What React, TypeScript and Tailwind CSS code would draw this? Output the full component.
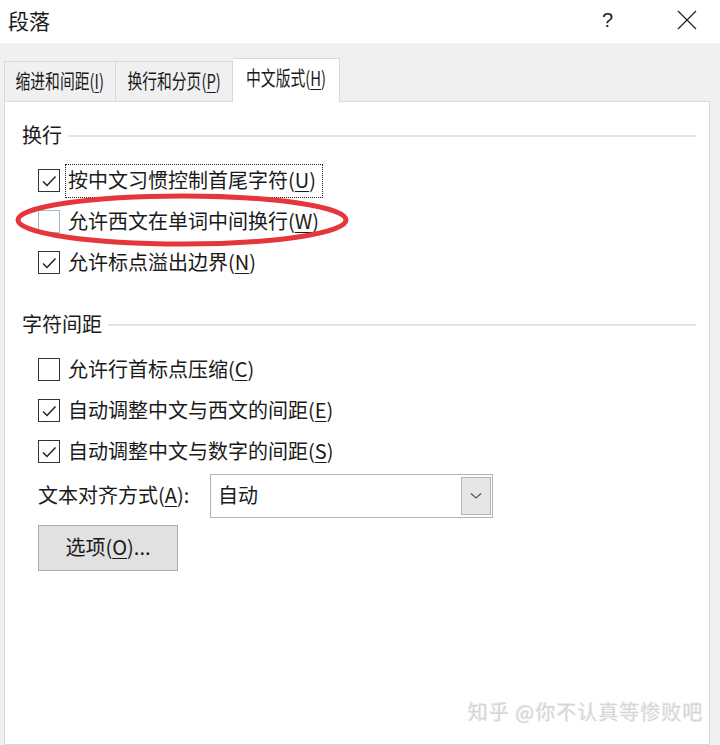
import React from "react";

const U = ({ c }: { c: string }) => <span className="underline underline-offset-[3px] decoration-1">{c}</span>;

function Box({ checked, pale }: { checked?: boolean; pale?: boolean }) {
  return (
    <div
      className={`w-[22px] h-[23px] shrink-0 border-[1.5px] bg-white flex items-center justify-center ${
        pale ? "border-[#9dbccc]" : "border-[#333333]"
      }`}
    >
      {checked && (
        <svg width="18" height="18" viewBox="0 0 18 18" fill="none">
          <path d="M3 9.5 L7 13.5 L15.5 4.5" stroke="#222" strokeWidth="1.5" />
        </svg>
      )}
    </div>
  );
}

function Row({ checked, pale, focus, children }: { checked?: boolean; pale?: boolean; focus?: boolean; children: React.ReactNode }) {
  return (
    <div className="h-[41px] flex items-center ml-[16px]">
      <Box checked={checked} pale={pale} />
      <div
        className={`ml-[6px] h-[32px] flex items-center pl-[2px] pr-[6px] whitespace-nowrap pb-[2px] ${
          focus ? "outline-1 outline-dotted outline-[#222]" : ""
        }`}
      >
        {children}
      </div>
    </div>
  );
}

function Header({ children }: { children: React.ReactNode }) {
  return (
    <div className="h-[28px] flex items-center mr-[13px]">
      <span className="whitespace-nowrap mt-[-2px]">{children}</span>
      <div className="flex-1 h-[2px] bg-[#e3e3e3] ml-[6px]" />
    </div>
  );
}

export default function App() {
  return (
    <div
      className="w-[720px] h-[745px] bg-[#f0f0f0] overflow-hidden relative flex flex-col text-[20px] text-[#1a1a1a] leading-none"
      style={{ fontFamily: '"Noto Sans CJK SC", "Noto Sans", sans-serif' }}
    >
      {/* title bar */}
      <div className="h-[43px] bg-white flex items-center shrink-0">
        <span className="ml-[8px] text-[21px] mt-[-2px]">段落</span>
        <div className="flex-1" />
        <span className="text-[20px] text-[#222] font-light mr-[64px] mt-[-4px]" style={{ fontFamily: '"Liberation Sans", sans-serif' }}>?</span>
        <svg width="20" height="20" viewBox="0 0 20 20" className="mr-[23px] mt-[-4px]">
          <path d="M1 1 L19 19 M19 1 L1 19" stroke="#222" strokeWidth="1.2" />
        </svg>
      </div>

      <div className="flex-1 flex flex-col pl-[4px] pr-[10px] pt-[14px]">
        {/* tabs */}
        <div className="flex items-end h-[44px] relative z-10 text-[20px] whitespace-nowrap">
          <div className="h-[40px] w-[112px] border border-b-0 border-[#d9d9d9] bg-[#f0f0f0] flex items-center justify-center pb-[2px]">
            <span className="inline-block scale-x-[0.74]">缩进和间距(<U c="I" />)</span>
          </div>
          <div className="h-[40px] w-[117px] border border-b-0 border-l-0 border-[#d9d9d9] bg-[#f0f0f0] flex items-center justify-center pb-[2px]">
            <span className="inline-block scale-x-[0.74]">换行和分页(<U c="P" />)</span>
          </div>
          <div className="h-[44px] w-[107px] border border-b-0 border-l-0 border-[#d9d9d9] bg-white flex items-center justify-center mb-[-1px] pb-[6px]">
            <span className="inline-block scale-x-[0.74]">中文版式(<U c="H" />)</span>
          </div>
        </div>

        {/* panel */}
        <div className="flex-1 bg-white border border-[#d9d9d9] pl-[17px] pt-[20px] flex flex-col">
          <Header>换行</Header>
          <div className="mt-[10px]">
            <Row checked focus>
              <span>按中文习惯控制首尾字符(<U c="U" />)</span>
            </Row>
            <Row pale>
              <span>允许西文在单词中间换行(<U c="W" />)</span>
            </Row>
            <Row checked>
              <span>允许标点溢出边界(<U c="N" />)</span>
            </Row>
          </div>

          <div className="mt-[28px]">
            <Header>字符间距</Header>
          </div>
          <div className="mt-[10px]">
            <Row>
              <span>允许行首标点压缩(<U c="C" />)</span>
            </Row>
            <Row checked>
              <span>自动调整中文与西文的间距(<U c="E" />)</span>
            </Row>
            <Row checked>
              <span>自动调整中文与数字的间距(<U c="S" />)</span>
            </Row>
          </div>

          <div className="mt-[2px] h-[44px] flex items-center ml-[16px] whitespace-nowrap">
            <span className="w-[172px] mt-[-2px]">文本对齐方式(<U c="A" />):</span>
            <div className="w-[283px] h-[44px] border border-[#b4b4b4] bg-white flex items-center">
              <span className="ml-[7px] flex-1 mt-[-2px]">自动</span>
              <div className="w-[30px] h-[38px] mr-[1px] bg-[#e6e6e6] border border-[#b4b4b4] flex items-center justify-center">
                <svg width="12" height="8" viewBox="0 0 12 8">
                  <path d="M1 1.5 L6 6 L11 1.5" stroke="#555" strokeWidth="1.2" fill="none" />
                </svg>
              </div>
            </div>
          </div>

          <div className="mt-[7px] ml-[16px]">
            <div className="w-[140px] h-[46px] bg-[#e1e1e1] border border-[#adadad] flex items-center justify-center whitespace-nowrap pb-[2px]">
              <span>选项(<U c="O" />)...</span>
            </div>
          </div>
        </div>
      </div>

      {/* red ellipse annotation */}
      <svg className="absolute left-0 top-0 pointer-events-none" width="720" height="745">
        <ellipse cx="182" cy="220" rx="164" ry="24" fill="none" stroke="#e5363c" strokeWidth="5" />
      </svg>

      {/* watermark */}
      <div
        className="absolute left-[468px] top-[702px] text-[20px] text-[#d6d6d6] tracking-[1px] whitespace-nowrap"
        style={{ textShadow: "1px 1px 0 #ffffff, -1px -1px 0 #ececec" }}
      >
        知乎 @你不认真等惨败吧
      </div>
    </div>
  );
}
